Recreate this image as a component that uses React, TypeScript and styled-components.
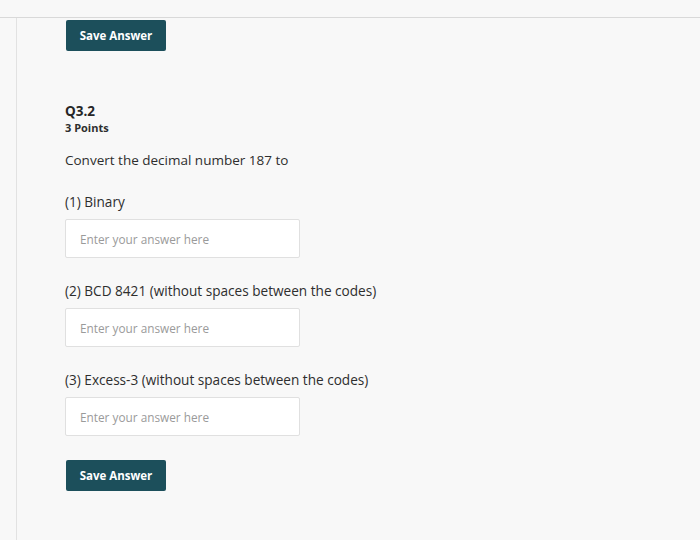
import styled, { createGlobalStyle } from "styled-components";

const GlobalStyle = createGlobalStyle`
  html, body {
    margin: 0;
    padding: 0;
    background: #f8f8f8;
    font-family: "Open Sans", "Liberation Sans", sans-serif;
    color: #2e2e2e;
  }
  * {
    box-sizing: border-box;
  }
`;

const Page = styled.div`
  display: flex;
  flex-direction: column;
  width: 700px;
  height: 540px;
  overflow: hidden;
`;

const TopBar = styled.div`
  height: 18px;
  flex-shrink: 0;
  border-bottom: 1px solid #d9d9d9;
`;

const Body = styled.div`
  flex: 1;
  margin-left: 16px;
  border-left: 1px solid #e2e2e2;
  padding: 2px 0 0 48px;
`;

const SaveButton = styled.button`
  display: block;
  width: 100px;
  height: 31px;
  margin-left: 1px;
  padding: 0;
  border: none;
  border-radius: 2px;
  background: #1c4f5b;
  color: #ffffff;
  font-family: "Open Sans", "Liberation Sans", sans-serif;
  font-size: 11.5px;
  font-weight: 700;
  cursor: pointer;
`;

const Question = styled.section`
  display: flex;
  flex-direction: column;
  margin-top: 51px;
`;

const Title = styled.h2`
  margin: 0;
  font-size: 13.5px;
  line-height: 18px;
  font-weight: 700;
  color: #262626;
`;

const Points = styled.div`
  margin-top: 1px;
  font-size: 11px;
  line-height: 14px;
  font-weight: 700;
  color: #2e2e2e;
`;

const Prompt = styled.p`
  margin: 16px 0 0;
  font-size: 13.5px;
  line-height: 18px;
  color: #2e2e2e;
`;

const Part = styled.label`
  display: flex;
  flex-direction: column;
  gap: 8px;
  margin-top: 24px;
  font-size: 13.6px;
  line-height: 18px;
  color: #2e2e2e;
`;

const AnswerInput = styled.input`
  width: 235px;
  height: 39px;
  padding: 0 14px;
  background: #ffffff;
  border: 1px solid #e0e0e0;
  border-radius: 2px;
  font-family: "Open Sans", "Liberation Sans", sans-serif;
  font-size: 11.8px;
  color: #333333;
  outline: none;

  &::placeholder {
    color: #9a9a9a;
  }
`;

const BottomButton = styled(SaveButton)`
  margin-top: 24px;
`;

const parts = [
  "(1) Binary",
  "(2) BCD 8421 (without spaces between the codes)",
  "(3) Excess-3 (without spaces between the codes)",
];

export default function App() {
  return (
    <Page>
      <GlobalStyle />
      <TopBar />
      <Body>
        <SaveButton>Save Answer</SaveButton>
        <Question>
          <Title>Q3.2</Title>
          <Points>3 Points</Points>
          <Prompt>Convert the decimal number 187 to</Prompt>
          {parts.map((p) => (
            <Part key={p}>
              {p}
              <AnswerInput placeholder="Enter your answer here" />
            </Part>
          ))}
          <BottomButton>Save Answer</BottomButton>
        </Question>
      </Body>
    </Page>
  );
}
